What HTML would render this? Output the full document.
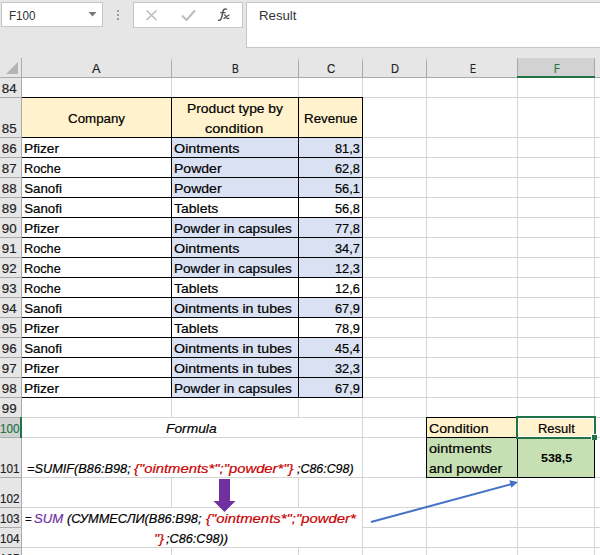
<!DOCTYPE html>
<html><head><meta charset="utf-8"><style>
html,body{margin:0;padding:0;}
body{width:600px;height:555px;overflow:hidden;position:relative;background:#fff;font-family:"Liberation Sans",sans-serif;}
body>div{position:absolute;box-sizing:content-box;}
.t{white-space:pre;-webkit-text-stroke:0.2px currentColor;}
</style></head><body>
<div style="left:0px;top:0px;width:600px;height:58px;background:#e6e6e6;"></div>
<div style="left:1px;top:2px;width:100px;height:23px;background:#fff;border:1px solid #c6c6c6"></div>
<svg style="position:absolute;left:0;top:0" width="600" height="58"><polygon points="88.5,12 96.5,12 92.5,16.5" fill="#777"/><rect x="117" y="10" width="2" height="2" fill="#9a9a9a"/><rect x="117" y="14" width="2" height="2" fill="#9a9a9a"/><rect x="117" y="18" width="2" height="2" fill="#9a9a9a"/></svg>
<div style="left:133px;top:2px;width:108px;height:24px;background:#fff;border:1px solid #c6c6c6"></div>
<div style="left:246px;top:2px;width:360px;height:44px;background:#fff;border:1px solid #c6c6c6"></div>
<svg style="position:absolute;left:0;top:0" width="600" height="58"><path d="M146.5,10.5 L156.5,20 M156.5,10.5 L146.5,20" stroke="#bdbdbd" stroke-width="1.6" fill="none"/><path d="M182,15.5 L186.5,20 L195,10.5" stroke="#bdbdbd" stroke-width="2" fill="none"/><path d="M226.8,9.6 C226,8.6 224.2,8.6 223.4,10.2 C223,11 222.6,13 222.2,15 C221.8,17.5 221.4,19.5 220,20.2 C219.3,20.5 218.6,20.2 218.3,19.8" stroke="#555" stroke-width="1.5" fill="none"/><path d="M220.3,12.6 L225.6,12.6" stroke="#555" stroke-width="1.3" fill="none"/><path d="M223.8,15 C224.8,14.6 225.4,15 225.8,16 L226.6,18 C227,18.8 228,18.8 229.4,18.2 M229.4,14.8 L223.6,18.6" stroke="#555" stroke-width="1.3" fill="none"/></svg>
<div class="t" style="left:9.00px;top:9.00px;font-size:13.3px;line-height:13.3px;font-weight:normal;font-style:normal;color:#333;transform:scaleX(0.8739);transform-origin:0 0;-webkit-text-stroke:0;">F100</div>
<div class="t" style="left:259.00px;top:9.00px;font-size:13.3px;line-height:13.3px;font-weight:normal;font-style:normal;color:#333;transform:scaleX(0.9945);transform-origin:0 0;-webkit-text-stroke:0;">Result</div>
<div style="left:0px;top:58px;width:600px;height:20px;background:#e6e6e6;"></div>
<div style="left:0px;top:58px;width:22px;height:497px;background:#e6e6e6;"></div>
<div style="left:22px;top:78px;width:578px;height:477px;background:#fff;"></div>
<div style="left:518px;top:58px;width:76px;height:19px;background:#d2d2d2;"></div>
<div style="left:21px;top:58px;width:1px;height:19px;background:linear-gradient(#cccccc,#ababab 30%)"></div>
<div style="left:171px;top:58px;width:1px;height:19px;background:linear-gradient(#cccccc,#ababab 30%)"></div>
<div style="left:298px;top:58px;width:1px;height:19px;background:linear-gradient(#cccccc,#ababab 30%)"></div>
<div style="left:362px;top:58px;width:1px;height:19px;background:linear-gradient(#cccccc,#ababab 30%)"></div>
<div style="left:426px;top:58px;width:1px;height:19px;background:linear-gradient(#cccccc,#ababab 30%)"></div>
<div style="left:517px;top:58px;width:1px;height:19px;background:linear-gradient(#cccccc,#ababab 30%)"></div>
<div style="left:594px;top:58px;width:1px;height:19px;background:linear-gradient(#cccccc,#ababab 30%)"></div>
<div style="left:0px;top:77px;width:600px;height:1px;background:#ababab;"></div>
<div style="left:517px;top:58px;width:1px;height:19px;background:#a8a8a8;"></div>
<div style="left:594px;top:58px;width:1px;height:19px;background:#a8a8a8;"></div>
<div style="left:517px;top:76px;width:78px;height:2px;background:#217346;"></div>
<div style="left:21px;top:58px;width:1px;height:497px;background:#ababab;"></div>
<svg style="position:absolute;left:0;top:0" width="22" height="78"><polygon points="6,74 18,74 18,62" fill="#b4b4b4"/></svg>
<div style="left:0px;top:418px;width:21px;height:19px;background:#d2d2d2;"></div>
<div style="left:0px;top:97px;width:21px;height:1px;background:#ababab;"></div>
<div class="t" style="left:1.82px;top:82.00px;font-size:13.3px;line-height:13.3px;font-weight:normal;font-style:normal;color:#222;">84</div>
<div style="left:0px;top:137px;width:21px;height:1px;background:#ababab;"></div>
<div class="t" style="left:1.82px;top:122.00px;font-size:13.3px;line-height:13.3px;font-weight:normal;font-style:normal;color:#222;">85</div>
<div style="left:0px;top:157px;width:21px;height:1px;background:#ababab;"></div>
<div class="t" style="left:1.82px;top:142.00px;font-size:13.3px;line-height:13.3px;font-weight:normal;font-style:normal;color:#222;">86</div>
<div style="left:0px;top:177px;width:21px;height:1px;background:#ababab;"></div>
<div class="t" style="left:1.82px;top:162.00px;font-size:13.3px;line-height:13.3px;font-weight:normal;font-style:normal;color:#222;">87</div>
<div style="left:0px;top:197px;width:21px;height:1px;background:#ababab;"></div>
<div class="t" style="left:1.82px;top:182.00px;font-size:13.3px;line-height:13.3px;font-weight:normal;font-style:normal;color:#222;">88</div>
<div style="left:0px;top:217px;width:21px;height:1px;background:#ababab;"></div>
<div class="t" style="left:1.82px;top:202.00px;font-size:13.3px;line-height:13.3px;font-weight:normal;font-style:normal;color:#222;">89</div>
<div style="left:0px;top:237px;width:21px;height:1px;background:#ababab;"></div>
<div class="t" style="left:1.82px;top:222.00px;font-size:13.3px;line-height:13.3px;font-weight:normal;font-style:normal;color:#222;">90</div>
<div style="left:0px;top:257px;width:21px;height:1px;background:#ababab;"></div>
<div class="t" style="left:1.82px;top:242.00px;font-size:13.3px;line-height:13.3px;font-weight:normal;font-style:normal;color:#222;">91</div>
<div style="left:0px;top:277px;width:21px;height:1px;background:#ababab;"></div>
<div class="t" style="left:1.82px;top:262.00px;font-size:13.3px;line-height:13.3px;font-weight:normal;font-style:normal;color:#222;">92</div>
<div style="left:0px;top:297px;width:21px;height:1px;background:#ababab;"></div>
<div class="t" style="left:1.82px;top:282.00px;font-size:13.3px;line-height:13.3px;font-weight:normal;font-style:normal;color:#222;">93</div>
<div style="left:0px;top:317px;width:21px;height:1px;background:#ababab;"></div>
<div class="t" style="left:1.82px;top:302.00px;font-size:13.3px;line-height:13.3px;font-weight:normal;font-style:normal;color:#222;">94</div>
<div style="left:0px;top:337px;width:21px;height:1px;background:#ababab;"></div>
<div class="t" style="left:1.82px;top:322.00px;font-size:13.3px;line-height:13.3px;font-weight:normal;font-style:normal;color:#222;">95</div>
<div style="left:0px;top:357px;width:21px;height:1px;background:#ababab;"></div>
<div class="t" style="left:1.82px;top:342.00px;font-size:13.3px;line-height:13.3px;font-weight:normal;font-style:normal;color:#222;">96</div>
<div style="left:0px;top:377px;width:21px;height:1px;background:#ababab;"></div>
<div class="t" style="left:1.82px;top:362.00px;font-size:13.3px;line-height:13.3px;font-weight:normal;font-style:normal;color:#222;">97</div>
<div style="left:0px;top:397px;width:21px;height:1px;background:#ababab;"></div>
<div class="t" style="left:1.82px;top:382.00px;font-size:13.3px;line-height:13.3px;font-weight:normal;font-style:normal;color:#222;">98</div>
<div style="left:0px;top:417px;width:21px;height:1px;background:#ababab;"></div>
<div class="t" style="left:1.82px;top:402.00px;font-size:13.3px;line-height:13.3px;font-weight:normal;font-style:normal;color:#222;">99</div>
<div style="left:0px;top:437px;width:21px;height:1px;background:#ababab;"></div>
<div class="t" style="left:-0.50px;top:422.00px;font-size:13.3px;line-height:13.3px;font-weight:normal;font-style:normal;color:#217346;transform:scaleX(0.8779);transform-origin:0 0;">100</div>
<div style="left:0px;top:477px;width:21px;height:1px;background:#ababab;"></div>
<div class="t" style="left:-0.50px;top:462.00px;font-size:13.3px;line-height:13.3px;font-weight:normal;font-style:normal;color:#222;transform:scaleX(0.8779);transform-origin:0 0;">101</div>
<div style="left:0px;top:507px;width:21px;height:1px;background:#ababab;"></div>
<div class="t" style="left:-0.50px;top:492.00px;font-size:13.3px;line-height:13.3px;font-weight:normal;font-style:normal;color:#222;transform:scaleX(0.8779);transform-origin:0 0;">102</div>
<div style="left:0px;top:527px;width:21px;height:1px;background:#ababab;"></div>
<div class="t" style="left:-0.50px;top:512.00px;font-size:13.3px;line-height:13.3px;font-weight:normal;font-style:normal;color:#222;transform:scaleX(0.8779);transform-origin:0 0;">103</div>
<div style="left:0px;top:547px;width:21px;height:1px;background:#ababab;"></div>
<div class="t" style="left:-0.50px;top:532.00px;font-size:13.3px;line-height:13.3px;font-weight:normal;font-style:normal;color:#222;transform:scaleX(0.8779);transform-origin:0 0;">104</div>
<div class="t" style="left:-0.50px;top:552.00px;font-size:13.3px;line-height:13.3px;font-weight:normal;font-style:normal;color:#222;transform:scaleX(0.8779);transform-origin:0 0;">105</div>
<div style="left:20px;top:417px;width:2px;height:21px;background:#217346;"></div>
<div class="t" style="left:92.30px;top:62.00px;font-size:13.3px;line-height:13.3px;font-weight:normal;font-style:normal;color:#222;transform:scaleX(0.9539);transform-origin:0 0;">A</div>
<div class="t" style="left:232.30px;top:62.00px;font-size:13.3px;line-height:13.3px;font-weight:normal;font-style:normal;color:#222;transform:scaleX(0.7688);transform-origin:0 0;">B</div>
<div class="t" style="left:327.00px;top:62.00px;font-size:13.3px;line-height:13.3px;font-weight:normal;font-style:normal;color:#222;transform:scaleX(0.8563);transform-origin:0 0;">C</div>
<div class="t" style="left:391.00px;top:62.00px;font-size:13.3px;line-height:13.3px;font-weight:normal;font-style:normal;color:#222;transform:scaleX(0.8354);transform-origin:0 0;">D</div>
<div class="t" style="left:470.00px;top:62.00px;font-size:13.3px;line-height:13.3px;font-weight:normal;font-style:normal;color:#222;transform:scaleX(0.6784);transform-origin:0 0;">E</div>
<div class="t" style="left:554.00px;top:62.00px;font-size:13.3px;line-height:13.3px;font-weight:normal;font-style:normal;color:#217346;transform:scaleX(0.7149);transform-origin:0 0;">F</div>
<div style="left:22px;top:98px;width:340px;height:39px;background:#fff2cc;"></div>
<div style="left:172px;top:138px;width:190px;height:19px;background:#d9e1f2;"></div>
<div style="left:172px;top:158px;width:190px;height:19px;background:#d9e1f2;"></div>
<div style="left:172px;top:178px;width:190px;height:19px;background:#d9e1f2;"></div>
<div style="left:172px;top:218px;width:190px;height:19px;background:#d9e1f2;"></div>
<div style="left:172px;top:238px;width:190px;height:19px;background:#d9e1f2;"></div>
<div style="left:172px;top:258px;width:190px;height:19px;background:#d9e1f2;"></div>
<div style="left:172px;top:298px;width:190px;height:19px;background:#d9e1f2;"></div>
<div style="left:172px;top:338px;width:190px;height:19px;background:#d9e1f2;"></div>
<div style="left:172px;top:358px;width:190px;height:19px;background:#d9e1f2;"></div>
<div style="left:172px;top:378px;width:190px;height:19px;background:#d9e1f2;"></div>
<div style="left:427px;top:418px;width:167px;height:19px;background:#fff2cc;"></div>
<div style="left:427px;top:438px;width:167px;height:39px;background:#c6e0b4;"></div>
<div style="left:171px;top:78px;width:1px;height:19px;background:#d4d4d4;"></div>
<div style="left:298px;top:78px;width:1px;height:19px;background:#d4d4d4;"></div>
<div style="left:171px;top:398px;width:1px;height:19px;background:#d4d4d4;"></div>
<div style="left:298px;top:398px;width:1px;height:19px;background:#d4d4d4;"></div>
<div style="left:171px;top:478px;width:1px;height:29px;background:#d4d4d4;"></div>
<div style="left:298px;top:478px;width:1px;height:29px;background:#d4d4d4;"></div>
<div style="left:171px;top:548px;width:1px;height:7px;background:#d4d4d4;"></div>
<div style="left:298px;top:548px;width:1px;height:7px;background:#d4d4d4;"></div>
<div style="left:362px;top:78px;width:1px;height:477px;background:#d4d4d4;"></div>
<div style="left:426px;top:78px;width:1px;height:477px;background:#d4d4d4;"></div>
<div style="left:517px;top:78px;width:1px;height:477px;background:#d4d4d4;"></div>
<div style="left:594px;top:78px;width:1px;height:477px;background:#d4d4d4;"></div>
<div style="left:22px;top:97px;width:578px;height:1px;background:#d4d4d4;"></div>
<div style="left:22px;top:137px;width:578px;height:1px;background:#d4d4d4;"></div>
<div style="left:22px;top:157px;width:578px;height:1px;background:#d4d4d4;"></div>
<div style="left:22px;top:177px;width:578px;height:1px;background:#d4d4d4;"></div>
<div style="left:22px;top:197px;width:578px;height:1px;background:#d4d4d4;"></div>
<div style="left:22px;top:217px;width:578px;height:1px;background:#d4d4d4;"></div>
<div style="left:22px;top:237px;width:578px;height:1px;background:#d4d4d4;"></div>
<div style="left:22px;top:257px;width:578px;height:1px;background:#d4d4d4;"></div>
<div style="left:22px;top:277px;width:578px;height:1px;background:#d4d4d4;"></div>
<div style="left:22px;top:297px;width:578px;height:1px;background:#d4d4d4;"></div>
<div style="left:22px;top:317px;width:578px;height:1px;background:#d4d4d4;"></div>
<div style="left:22px;top:337px;width:578px;height:1px;background:#d4d4d4;"></div>
<div style="left:22px;top:357px;width:578px;height:1px;background:#d4d4d4;"></div>
<div style="left:22px;top:377px;width:578px;height:1px;background:#d4d4d4;"></div>
<div style="left:22px;top:397px;width:578px;height:1px;background:#d4d4d4;"></div>
<div style="left:22px;top:417px;width:578px;height:1px;background:#d4d4d4;"></div>
<div style="left:22px;top:437px;width:578px;height:1px;background:#d4d4d4;"></div>
<div style="left:22px;top:477px;width:578px;height:1px;background:#d4d4d4;"></div>
<div style="left:22px;top:507px;width:578px;height:1px;background:#d4d4d4;"></div>
<div style="left:362px;top:527px;width:238px;height:1px;background:#d4d4d4;"></div>
<div style="left:22px;top:547px;width:578px;height:1px;background:#d4d4d4;"></div>
<div style="left:22px;top:97px;width:341px;height:1px;background:#000;"></div>
<div style="left:22px;top:137px;width:341px;height:1px;background:#000;"></div>
<div style="left:22px;top:157px;width:341px;height:1px;background:#000;"></div>
<div style="left:22px;top:177px;width:341px;height:1px;background:#000;"></div>
<div style="left:22px;top:197px;width:341px;height:1px;background:#000;"></div>
<div style="left:22px;top:217px;width:341px;height:1px;background:#000;"></div>
<div style="left:22px;top:237px;width:341px;height:1px;background:#000;"></div>
<div style="left:22px;top:257px;width:341px;height:1px;background:#000;"></div>
<div style="left:22px;top:277px;width:341px;height:1px;background:#000;"></div>
<div style="left:22px;top:297px;width:341px;height:1px;background:#000;"></div>
<div style="left:22px;top:317px;width:341px;height:1px;background:#000;"></div>
<div style="left:22px;top:337px;width:341px;height:1px;background:#000;"></div>
<div style="left:22px;top:357px;width:341px;height:1px;background:#000;"></div>
<div style="left:22px;top:377px;width:341px;height:1px;background:#000;"></div>
<div style="left:22px;top:397px;width:341px;height:1px;background:#000;"></div>
<div style="left:171px;top:97px;width:1px;height:301px;background:#000;"></div>
<div style="left:298px;top:97px;width:1px;height:301px;background:#000;"></div>
<div style="left:362px;top:97px;width:1px;height:301px;background:#000;"></div>
<div style="left:426px;top:417px;width:169px;height:1px;background:#000;"></div>
<div style="left:426px;top:437px;width:169px;height:1px;background:#000;"></div>
<div style="left:426px;top:477px;width:169px;height:1px;background:#000;"></div>
<div style="left:426px;top:417px;width:1px;height:61px;background:#000;"></div>
<div style="left:517px;top:417px;width:1px;height:61px;background:#000;"></div>
<div style="left:594px;top:417px;width:1px;height:61px;background:#000;"></div>
<div class="t" style="left:68.10px;top:112.00px;font-size:13.3px;line-height:13.3px;font-weight:normal;font-style:normal;color:#000;">Company</div>
<div class="t" style="left:186.70px;top:102.00px;font-size:13.3px;line-height:13.3px;font-weight:normal;font-style:normal;color:#000;transform:scaleX(1.0386);transform-origin:0 0;">Product type by</div>
<div class="t" style="left:205.35px;top:122.00px;font-size:13.3px;line-height:13.3px;font-weight:normal;font-style:normal;color:#000;transform:scaleX(1.0945);transform-origin:0 0;">condition</div>
<div class="t" style="left:303.95px;top:112.00px;font-size:13.3px;line-height:13.3px;font-weight:normal;font-style:normal;color:#000;transform:scaleX(1.0044);transform-origin:0 0;">Revenue</div>
<div class="t" style="left:24.20px;top:142.00px;font-size:13.3px;line-height:13.3px;font-weight:normal;font-style:normal;color:#000;transform:scaleX(1.0300);transform-origin:0 0;">Pfizer</div>
<div class="t" style="left:174.30px;top:142.00px;font-size:13.3px;line-height:13.3px;font-weight:normal;font-style:normal;color:#000;transform:scaleX(1.0779);transform-origin:0 0;">Ointments</div>
<div class="t" style="left:334.80px;top:142.00px;font-size:13.3px;line-height:13.3px;font-weight:normal;font-style:normal;color:#000;transform:scaleX(0.9587);transform-origin:0 0;">81,3</div>
<div class="t" style="left:24.20px;top:162.00px;font-size:13.3px;line-height:13.3px;font-weight:normal;font-style:normal;color:#000;transform:scaleX(0.9548);transform-origin:0 0;">Roche</div>
<div class="t" style="left:174.30px;top:162.00px;font-size:13.3px;line-height:13.3px;font-weight:normal;font-style:normal;color:#000;transform:scaleX(1.0557);transform-origin:0 0;">Powder</div>
<div class="t" style="left:334.80px;top:162.00px;font-size:13.3px;line-height:13.3px;font-weight:normal;font-style:normal;color:#000;transform:scaleX(0.9587);transform-origin:0 0;">62,8</div>
<div class="t" style="left:24.20px;top:182.00px;font-size:13.3px;line-height:13.3px;font-weight:normal;font-style:normal;color:#000;">Sanofi</div>
<div class="t" style="left:174.30px;top:182.00px;font-size:13.3px;line-height:13.3px;font-weight:normal;font-style:normal;color:#000;transform:scaleX(1.0557);transform-origin:0 0;">Powder</div>
<div class="t" style="left:334.80px;top:182.00px;font-size:13.3px;line-height:13.3px;font-weight:normal;font-style:normal;color:#000;transform:scaleX(0.9587);transform-origin:0 0;">56,1</div>
<div class="t" style="left:24.20px;top:202.00px;font-size:13.3px;line-height:13.3px;font-weight:normal;font-style:normal;color:#000;">Sanofi</div>
<div class="t" style="left:174.30px;top:202.00px;font-size:13.3px;line-height:13.3px;font-weight:normal;font-style:normal;color:#000;transform:scaleX(1.0507);transform-origin:0 0;">Tablets</div>
<div class="t" style="left:334.80px;top:202.00px;font-size:13.3px;line-height:13.3px;font-weight:normal;font-style:normal;color:#000;transform:scaleX(0.9587);transform-origin:0 0;">56,8</div>
<div class="t" style="left:24.20px;top:222.00px;font-size:13.3px;line-height:13.3px;font-weight:normal;font-style:normal;color:#000;transform:scaleX(1.0300);transform-origin:0 0;">Pfizer</div>
<div class="t" style="left:174.30px;top:222.00px;font-size:13.3px;line-height:13.3px;font-weight:normal;font-style:normal;color:#000;transform:scaleX(1.0216);transform-origin:0 0;">Powder in capsules</div>
<div class="t" style="left:334.80px;top:222.00px;font-size:13.3px;line-height:13.3px;font-weight:normal;font-style:normal;color:#000;transform:scaleX(0.9587);transform-origin:0 0;">77,8</div>
<div class="t" style="left:24.20px;top:242.00px;font-size:13.3px;line-height:13.3px;font-weight:normal;font-style:normal;color:#000;transform:scaleX(0.9548);transform-origin:0 0;">Roche</div>
<div class="t" style="left:174.30px;top:242.00px;font-size:13.3px;line-height:13.3px;font-weight:normal;font-style:normal;color:#000;transform:scaleX(1.0779);transform-origin:0 0;">Ointments</div>
<div class="t" style="left:334.80px;top:242.00px;font-size:13.3px;line-height:13.3px;font-weight:normal;font-style:normal;color:#000;transform:scaleX(0.9587);transform-origin:0 0;">34,7</div>
<div class="t" style="left:24.20px;top:262.00px;font-size:13.3px;line-height:13.3px;font-weight:normal;font-style:normal;color:#000;transform:scaleX(0.9548);transform-origin:0 0;">Roche</div>
<div class="t" style="left:174.30px;top:262.00px;font-size:13.3px;line-height:13.3px;font-weight:normal;font-style:normal;color:#000;transform:scaleX(1.0216);transform-origin:0 0;">Powder in capsules</div>
<div class="t" style="left:334.80px;top:262.00px;font-size:13.3px;line-height:13.3px;font-weight:normal;font-style:normal;color:#000;transform:scaleX(0.9587);transform-origin:0 0;">12,3</div>
<div class="t" style="left:24.20px;top:282.00px;font-size:13.3px;line-height:13.3px;font-weight:normal;font-style:normal;color:#000;transform:scaleX(0.9548);transform-origin:0 0;">Roche</div>
<div class="t" style="left:174.30px;top:282.00px;font-size:13.3px;line-height:13.3px;font-weight:normal;font-style:normal;color:#000;transform:scaleX(1.0507);transform-origin:0 0;">Tablets</div>
<div class="t" style="left:334.80px;top:282.00px;font-size:13.3px;line-height:13.3px;font-weight:normal;font-style:normal;color:#000;transform:scaleX(0.9587);transform-origin:0 0;">12,6</div>
<div class="t" style="left:24.20px;top:302.00px;font-size:13.3px;line-height:13.3px;font-weight:normal;font-style:normal;color:#000;">Sanofi</div>
<div class="t" style="left:174.30px;top:302.00px;font-size:13.3px;line-height:13.3px;font-weight:normal;font-style:normal;color:#000;transform:scaleX(1.0638);transform-origin:0 0;">Ointments in tubes</div>
<div class="t" style="left:334.80px;top:302.00px;font-size:13.3px;line-height:13.3px;font-weight:normal;font-style:normal;color:#000;transform:scaleX(0.9587);transform-origin:0 0;">67,9</div>
<div class="t" style="left:24.20px;top:322.00px;font-size:13.3px;line-height:13.3px;font-weight:normal;font-style:normal;color:#000;transform:scaleX(1.0300);transform-origin:0 0;">Pfizer</div>
<div class="t" style="left:174.30px;top:322.00px;font-size:13.3px;line-height:13.3px;font-weight:normal;font-style:normal;color:#000;transform:scaleX(1.0507);transform-origin:0 0;">Tablets</div>
<div class="t" style="left:334.80px;top:322.00px;font-size:13.3px;line-height:13.3px;font-weight:normal;font-style:normal;color:#000;transform:scaleX(0.9587);transform-origin:0 0;">78,9</div>
<div class="t" style="left:24.20px;top:342.00px;font-size:13.3px;line-height:13.3px;font-weight:normal;font-style:normal;color:#000;">Sanofi</div>
<div class="t" style="left:174.30px;top:342.00px;font-size:13.3px;line-height:13.3px;font-weight:normal;font-style:normal;color:#000;transform:scaleX(1.0638);transform-origin:0 0;">Ointments in tubes</div>
<div class="t" style="left:334.80px;top:342.00px;font-size:13.3px;line-height:13.3px;font-weight:normal;font-style:normal;color:#000;transform:scaleX(0.9587);transform-origin:0 0;">45,4</div>
<div class="t" style="left:24.20px;top:362.00px;font-size:13.3px;line-height:13.3px;font-weight:normal;font-style:normal;color:#000;transform:scaleX(1.0300);transform-origin:0 0;">Pfizer</div>
<div class="t" style="left:174.30px;top:362.00px;font-size:13.3px;line-height:13.3px;font-weight:normal;font-style:normal;color:#000;transform:scaleX(1.0638);transform-origin:0 0;">Ointments in tubes</div>
<div class="t" style="left:334.80px;top:362.00px;font-size:13.3px;line-height:13.3px;font-weight:normal;font-style:normal;color:#000;transform:scaleX(0.9587);transform-origin:0 0;">32,3</div>
<div class="t" style="left:24.20px;top:382.00px;font-size:13.3px;line-height:13.3px;font-weight:normal;font-style:normal;color:#000;transform:scaleX(1.0300);transform-origin:0 0;">Pfizer</div>
<div class="t" style="left:174.30px;top:382.00px;font-size:13.3px;line-height:13.3px;font-weight:normal;font-style:normal;color:#000;transform:scaleX(1.0216);transform-origin:0 0;">Powder in capsules</div>
<div class="t" style="left:334.80px;top:382.00px;font-size:13.3px;line-height:13.3px;font-weight:normal;font-style:normal;color:#000;transform:scaleX(0.9587);transform-origin:0 0;">67,9</div>
<div class="t" style="left:166.30px;top:422.00px;font-size:13.3px;line-height:13.3px;font-weight:normal;font-style:italic;color:#000;transform:scaleX(1.0367);transform-origin:0 0;">Formula</div>
<div class="t" style="left:27.30px;top:462.00px;font-size:13.3px;line-height:13.3px;font-weight:normal;font-style:italic;color:#000;transform:scaleX(0.9579);transform-origin:0 0;">=SUMIF(B86:B98;</div>
<div class="t" style="left:134.40px;top:462.00px;font-size:13.3px;line-height:13.3px;font-weight:normal;font-style:italic;color:#c80000;transform:scaleX(1.1152);transform-origin:0 0;">{"ointments*";"powder*"}</div>
<div class="t" style="left:296.70px;top:462.00px;font-size:13.3px;line-height:13.3px;font-weight:normal;font-style:italic;color:#000;transform:scaleX(0.9333);transform-origin:0 0;">;C86:C98)</div>
<div class="t" style="left:25.20px;top:512.00px;font-size:13.3px;line-height:13.3px;font-weight:normal;font-style:italic;color:#000;transform:scaleX(0.8354);transform-origin:0 0;">=</div>
<div class="t" style="left:34.20px;top:512.00px;font-size:13.3px;line-height:13.3px;font-weight:normal;font-style:italic;color:#7030a0;transform:scaleX(0.9901);transform-origin:0 0;">SUM</div>
<div class="t" style="left:67.20px;top:512.00px;font-size:13.3px;line-height:13.3px;font-weight:normal;font-style:italic;color:#000;transform:scaleX(0.9629);transform-origin:0 0;">(СУММЕСЛИ(B86:B98;</div>
<div class="t" style="left:206.00px;top:512.00px;font-size:13.3px;line-height:13.3px;font-weight:normal;font-style:italic;color:#c80000;transform:scaleX(1.1181);transform-origin:0 0;">{"ointments*";"powder*</div>
<div class="t" style="left:154.20px;top:532.00px;font-size:13.3px;line-height:13.3px;font-weight:normal;font-style:italic;color:#c80000;transform:scaleX(1.0897);transform-origin:0 0;">"}</div>
<div class="t" style="left:165.60px;top:532.00px;font-size:13.3px;line-height:13.3px;font-weight:normal;font-style:italic;color:#000;transform:scaleX(0.9533);transform-origin:0 0;">;C86:C98))</div>
<div class="t" style="left:429.30px;top:422.00px;font-size:13.3px;line-height:13.3px;font-weight:normal;font-style:normal;color:#000;transform:scaleX(1.0589);transform-origin:0 0;">Condition</div>
<div class="t" style="left:429.30px;top:442.00px;font-size:13.3px;line-height:13.3px;font-weight:normal;font-style:normal;color:#000;transform:scaleX(1.0892);transform-origin:0 0;">ointments</div>
<div class="t" style="left:429.30px;top:462.00px;font-size:13.3px;line-height:13.3px;font-weight:normal;font-style:normal;color:#000;transform:scaleX(1.0519);transform-origin:0 0;">and powder</div>
<div class="t" style="left:538.20px;top:422.00px;font-size:13.3px;line-height:13.3px;font-weight:normal;font-style:normal;color:#000;transform:scaleX(0.9760);transform-origin:0 0;">Result</div>
<div class="t" style="left:540.60px;top:452.00px;font-size:11.6px;line-height:11.6px;font-weight:bold;font-style:normal;color:#000;transform:scaleX(1.0737);transform-origin:0 0;-webkit-text-stroke:0;">538,5</div>
<div style="left:516px;top:416px;width:76px;height:19px;border:2px solid #217346"></div>
<div style="left:518px;top:418px;width:76px;height:1px;background:#fff;"></div>
<div style="left:518px;top:418px;width:1px;height:19px;background:#fff;"></div>
<div style="left:593px;top:418px;width:1px;height:19px;background:#fff;"></div>
<div style="left:518px;top:436px;width:76px;height:1px;background:#fff;"></div>
<div style="left:591px;top:434px;width:6px;height:6px;background:#fff;"></div>
<div style="left:592px;top:435px;width:5px;height:5px;background:#217346;"></div>
<svg style="position:absolute;left:0;top:0" width="600" height="555"><polygon points="219,479 230,479 230,501 235.5,501 224.5,512 213.5,501 219,501" fill="#7030a0"/><line x1="371" y1="522" x2="512" y2="484" stroke="#4472c4" stroke-width="2"/><polygon points="518,482 509.3,480.3 511.3,487.7" fill="#4472c4"/></svg>
</body></html>
